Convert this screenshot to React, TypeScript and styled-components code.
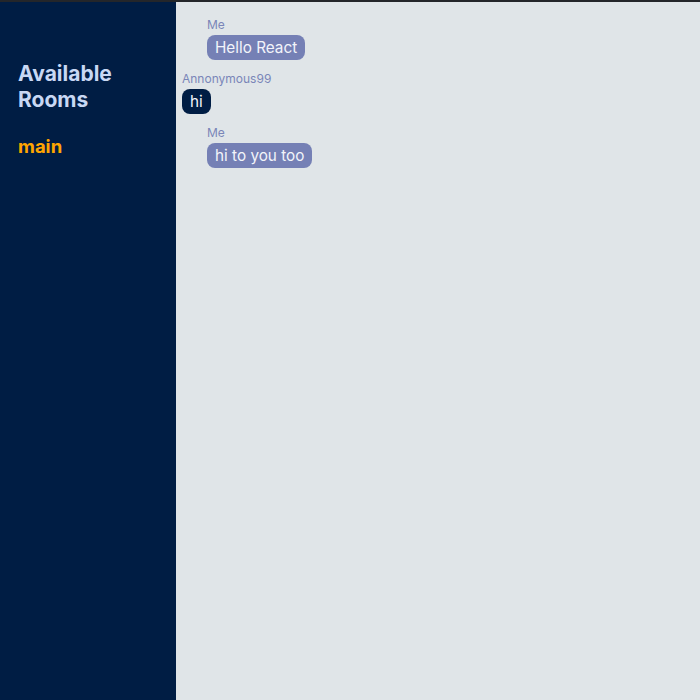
import React from 'react';
import styled, { createGlobalStyle } from 'styled-components';

const GlobalStyle = createGlobalStyle`
  html, body {
    margin: 0;
    padding: 0;
    height: 100%;
  }
  body {
    font-family: Inter, "Noto Sans", sans-serif;
  }
  #root {
    height: 100%;
  }
`;

const Layout = styled.div`
  height: 700px;
  display: flex;
  border-top: 2px solid #24262a;
  box-sizing: border-box;
  background: #e0e5e8;
`;

const Sidebar = styled.aside`
  width: 176px;
  flex-shrink: 0;
  background: #001d44;
  padding: 59px 18px 0;
  box-sizing: border-box;
`;

const SidebarTitle = styled.h2`
  margin: 0 0 21px;
  font-size: 21px;
  line-height: 26px;
  font-weight: 700;
  color: #c8d8f4;
`;

const RoomLink = styled.div<{ $active?: boolean }>`
  font-size: 18.5px;
  line-height: 24px;
  font-weight: 700;
  color: ${(p) => (p.$active ? '#ffa500' : '#c8d8f4')};
  cursor: pointer;
`;

const Chat = styled.main`
  flex: 1;
  padding: 15px 6px;
  display: flex;
  flex-direction: column;
  gap: 11px;
`;

const Message = styled.div<{ $mine?: boolean }>`
  display: flex;
  flex-direction: column;
  align-items: flex-start;
  margin-left: ${(p) => (p.$mine ? '25px' : '0')};
`;

const Author = styled.span`
  font-size: 12px;
  line-height: 16px;
  color: #7a86b8;
  margin-bottom: 2px;
`;

const Bubble = styled.div<{ $mine?: boolean }>`
  padding: 2px 8px;
  border-radius: 8px;
  font-size: 15.3px;
  line-height: 21px;
  color: #f2f4fa;
  background: ${(p) => (p.$mine ? '#7580b5' : '#001d44')};
`;

const messages = [
  { author: 'Me', text: 'Hello React', mine: true },
  { author: 'Annonymous99', text: 'hi', mine: false },
  { author: 'Me', text: 'hi to you too', mine: true },
];

export default function App() {
  return (
    <>
      <GlobalStyle />
      <Layout>
        <Sidebar>
          <SidebarTitle>Available Rooms</SidebarTitle>
          <RoomLink $active>main</RoomLink>
        </Sidebar>
        <Chat>
          {messages.map((m, i) => (
            <Message key={i} $mine={m.mine}>
              <Author>{m.author}</Author>
              <Bubble $mine={m.mine}>{m.text}</Bubble>
            </Message>
          ))}
        </Chat>
      </Layout>
    </>
  );
}
